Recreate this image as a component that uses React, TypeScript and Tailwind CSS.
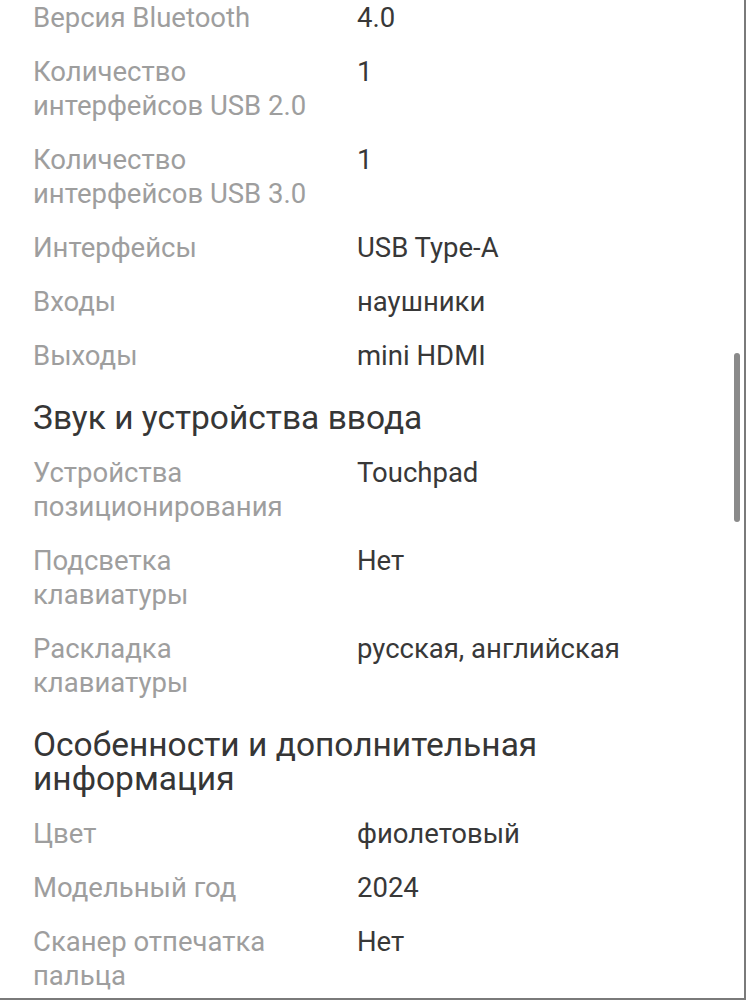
import React from "react";

type Row = { label: string; value: string };
type Block = { heading?: string; rows: Row[] };

const blocks: Block[] = [
  {
    rows: [
      { label: "Версия Bluetooth", value: "4.0" },
      { label: "Количество интерфейсов USB 2.0", value: "1" },
      { label: "Количество интерфейсов USB 3.0", value: "1" },
      { label: "Интерфейсы", value: "USB Type-A" },
      { label: "Входы", value: "наушники" },
      { label: "Выходы", value: "mini HDMI" },
    ],
  },
  {
    heading: "Звук и устройства ввода",
    rows: [
      { label: "Устройства позиционирования", value: "Touchpad" },
      { label: "Подсветка клавиатуры", value: "Нет" },
      { label: "Раскладка клавиатуры", value: "русская, английская" },
    ],
  },
  {
    heading: "Особенности и дополнительная информация",
    rows: [
      { label: "Цвет", value: "фиолетовый" },
      { label: "Модельный год", value: "2024" },
      { label: "Сканер отпечатка пальца", value: "Нет" },
    ],
  },
];

export default function App() {
  return (
    <div
      className="relative w-[746px] h-[1000px] overflow-hidden bg-white border-r-2 border-b-2 border-[#7a7a7a]"
      style={{ fontFamily: "Roboto, 'Noto Sans', sans-serif" }}
    >
      <div className="flex flex-col pl-[33px] pr-[20px] pt-[1px]">
        {blocks.map((b, bi) => (
          <div key={bi} className="flex flex-col">
            {b.heading && (
              <h2 className="text-[33.5px] leading-[34px] text-[#363636] font-normal mt-[8px] mb-[21px]">
                {b.heading}
              </h2>
            )}
            <div className="flex flex-col gap-[20px]">
              {b.rows.map((r, ri) => (
                <div key={ri} className="grid grid-cols-[285px_1fr] gap-x-[39px] text-[27.5px] leading-[34px]">
                  <div className="text-[#9e9e9e]">{r.label}</div>
                  <div className="text-[#383838]">{r.value}</div>
                </div>
              ))}
            </div>
            {bi < blocks.length - 1 && <div className="h-[20px]" />}
          </div>
        ))}
      </div>
      <div className="absolute left-[734px] top-[353px] w-[6px] h-[169px] rounded-full bg-[#8a8a8a]" />
    </div>
  );
}
